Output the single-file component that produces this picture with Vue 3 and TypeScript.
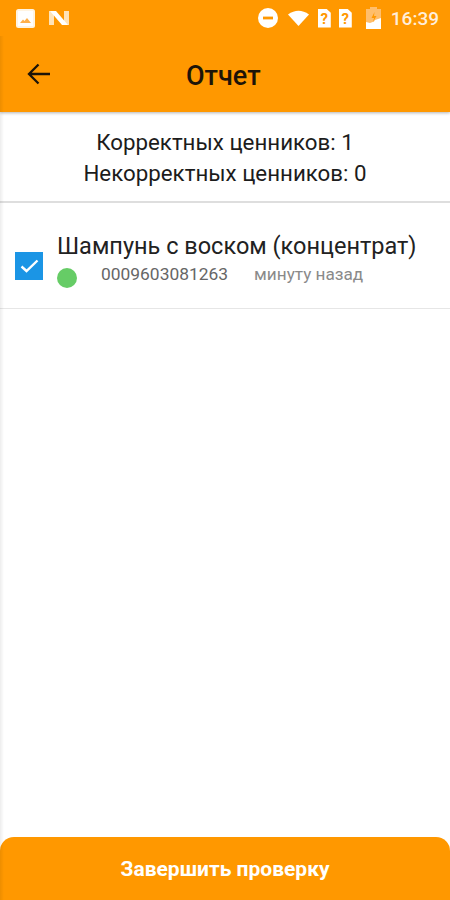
<script setup lang="ts">
const report = { correct: 1, incorrect: 0 }
const item = { name: 'Шампунь с воском (концентрат)', code: '0009603081263', time: 'минуту назад' }
</script>

<template>
  <div class="screen">
    <header class="appbar">
      <div class="status">
        <div class="status-left">
          <svg width="19" height="19" viewBox="0 0 19 19">
            <rect width="19" height="19" rx="2.500" fill="#fff4e2" />
            <rect x="2" y="2" width="15" height="15" fill="#fff" />
            <path d="M4 14l3-3.500 1.500 1.500 2.500-3 4 5z" fill="#ffb04a" />
          </svg>
          <svg width="20" height="16" viewBox="0 0 20 16">
            <path d="M0 1h5v14H0zM15 1h5v14h-5z" fill="#ffe3b8" />
            <path d="M1 1h6l12 14h-6z" fill="#fff" />
          </svg>
        </div>
        <div class="status-right">
          <svg class="ic-dnd" width="20" height="20" viewBox="0 0 20 20">
            <circle cx="10" cy="10" r="10" fill="#fff" />
            <rect x="5" y="8.600" width="10" height="2.800" fill="#ff9800" />
          </svg>
          <svg class="ic-wifi" width="21" height="16" viewBox="0 0 21 16">
            <path d="M0 4.500Q10.500-3 21 4.500L10.500 16z" fill="#fff" />
          </svg>
          <div class="sim">?</div>
          <div class="sim sim-2">?</div>
          <svg class="ic-batt" width="15" height="22" viewBox="0 0 15 22">
            <path d="M4 2V0h7v2h4v20H0V2z" fill="#ffbe6b" />
            <path d="M0 15l4 1 4-1.500 1-1.500 6-2v11H0z" fill="#fff" />
            <path d="M8.500 5l-3 6h2.500l-1 4 3.500-6H8z" fill="#ff9800" />
          </svg>
          <span class="clock">16:39</span>
        </div>
      </div>
      <div class="toolbar">
        <svg class="back" width="24" height="22" viewBox="0 0 24 22">
          <path d="M23 11H2M11.500 1.500L2 11l9.500 9.500" fill="none" stroke="#1d1408" stroke-width="2.300" />
        </svg>
        <h1 class="title">Отчет</h1>
      </div>
    </header>

    <section class="summary">
      <div>Корректных ценников: {{ report.correct }}</div>
      <div>Некорректных ценников: {{ report.incorrect }}</div>
    </section>

    <main class="list">
      <div class="row">
        <div class="check">
          <svg width="19" height="14" viewBox="0 0 19 14">
            <path d="M1.500 7.500l5 4.500L17.500 1.500" fill="none" stroke="#fff" stroke-width="2.400" />
          </svg>
        </div>
        <div class="row-body">
          <div class="name">{{ item.name }}</div>
          <div class="meta">
            <span class="dot"></span>
            <span class="code">{{ item.code }}</span>
            <span class="time">{{ item.time }}</span>
          </div>
        </div>
      </div>
    </main>

    <button type="button" class="finish">Завершить проверку</button>
    <div class="edge"></div>
  </div>
</template>

<style>
html,
body {
  margin: 0;
  background: #fff;
}
</style>

<style scoped>
.screen {
  position: relative;
  width: 450px;
  height: 900px;
  display: flex;
  flex-direction: column;
  overflow: hidden;
  font-family: Roboto, "Noto Sans", sans-serif;
  background: #fff;
}

/* shaded strip down the left side of the page */
.edge {
  position: absolute;
  left: 0;
  top: 36px;
  bottom: 0;
  width: 4px;
  background: linear-gradient(to right, rgba(0, 0, 0, 0.07), rgba(0, 0, 0, 0));
  pointer-events: none;
}

.appbar {
  flex: none;
  height: 112px;
  background: #ff9800;
  box-shadow: 0 1px 3px rgba(0, 0, 0, 0.3);
}

.status {
  height: 36px;
  display: flex;
  align-items: center;
  justify-content: space-between;
  padding: 0 11px 0 16px;
}

.status-left {
  display: flex;
  align-items: center;
  gap: 14px;
}

.status-right {
  display: flex;
  align-items: center;
}

.ic-dnd {
  margin-right: 10px;
}

.ic-wifi {
  margin-right: 9px;
}

.sim {
  width: 13px;
  height: 19px;
  background: #fff;
  clip-path: polygon(0 0, 65% 0, 100% 22%, 100% 100%, 0 100%);
  color: #ff9800;
  font-size: 15px;
  font-weight: 700;
  line-height: 20px;
  text-align: center;
}

.sim-2 {
  margin-left: 8px;
  margin-right: 14px;
}

.clock {
  margin-left: 10px;
  color: #ffeeda;
  font-size: 19px;
  font-weight: 500;
}

.toolbar {
  height: 76px;
  display: flex;
  align-items: center;
  padding-left: 27px;
}

.back {
  flex: none;
}

.title {
  margin: 3px 0 0 135px;
  color: #1d1408;
  font-size: 27px;
  font-weight: 500;
}

.summary {
  flex: none;
  height: 91px;
  box-sizing: border-box;
  padding-top: 15px;
  border-bottom: 2px solid #dedede;
  color: #1c1c1c;
  font-size: 22.300px;
  line-height: 31px;
  text-align: center;
}

.list {
  flex: 1;
}

.row {
  height: 106px;
  box-sizing: border-box;
  display: flex;
  padding: 28px 0 0 15px;
  border-bottom: 1px solid #e6e6e6;
}

.check {
  flex: none;
  width: 28px;
  height: 28px;
  margin-top: 21px;
  display: flex;
  align-items: center;
  justify-content: center;
  background: #1b95e5;
}

.row-body {
  margin-left: 14px;
}

.name {
  color: #222;
  font-size: 23.500px;
  line-height: 31px;
}

.meta {
  display: flex;
  align-items: center;
  height: 24px;
}

.dot {
  width: 20px;
  height: 20px;
  margin-top: 7px;
  border-radius: 50%;
  background: #66cc66;
}

.code {
  margin-left: 24px;
  color: #666;
  font-size: 17.400px;
}

.time {
  margin-left: 26px;
  color: #8a8a8a;
  font-size: 17.200px;
}

.finish {
  flex: none;
  height: 63px;
  width: 100%;
  padding: 0;
  border: 0;
  border-radius: 14px 14px 0 0;
  background: #ff9800;
  color: #fff;
  font-family: inherit;
  font-size: 21px;
  font-weight: 700;
}
</style>
